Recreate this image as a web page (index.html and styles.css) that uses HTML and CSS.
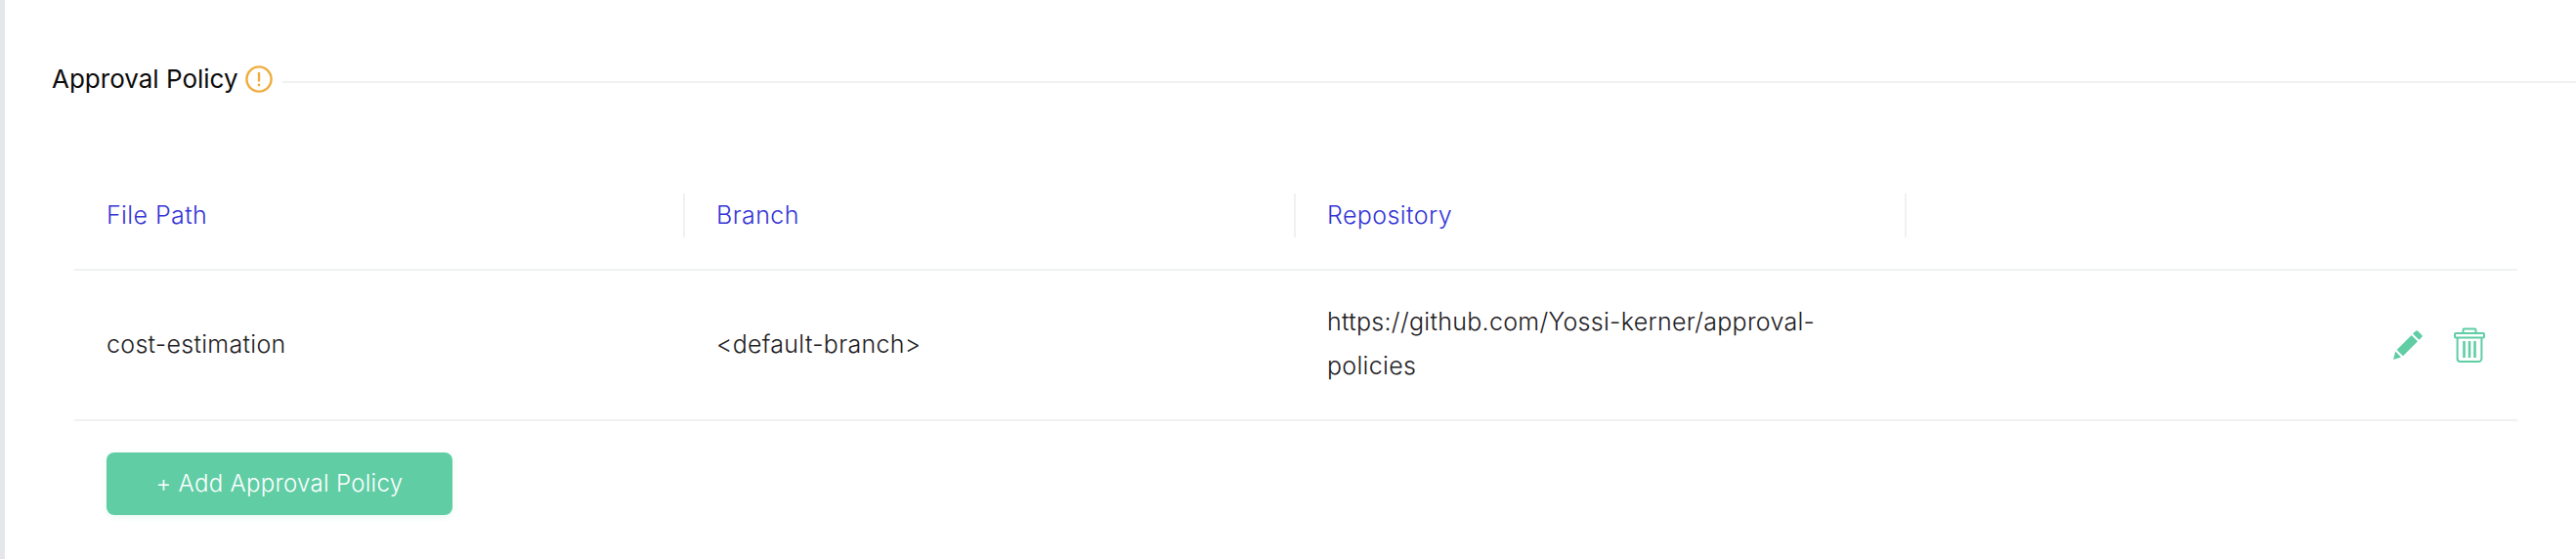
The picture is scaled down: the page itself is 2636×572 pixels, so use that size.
FILE: index.html
```html
<!DOCTYPE html>
<html lang="en">
<head>
<meta charset="utf-8">
<title>Approval Policy</title>
<link rel="stylesheet" href="styles.css">
</head>
<body>
<main class="page">
  <header class="section-head">
    <h2 class="section-title">Approval Policy</h2>
    <svg class="warn-icon" viewBox="0 0 28 28" aria-hidden="true">
      <circle cx="14" cy="14" r="12.6" fill="none" stroke="#f0ad3e" stroke-width="2.4"/>
      <path d="M14 7v9.5" fill="none" stroke="#f0ad3e" stroke-width="2.4"/>
      <path d="M14 18.6v2.6" fill="none" stroke="#f0ad3e" stroke-width="2.4"/>
    </svg>
    <span class="section-rule"></span>
  </header>
  <section class="policy-table">
    <div class="table-head">
      <div class="th">File Path</div>
      <div class="th">Branch</div>
      <div class="th">Repository</div>
      <div class="th th-last"></div>
    </div>
    <div class="table-row">
      <div class="td">cost-estimation</div>
      <div class="td">&lt;default-branch&gt;</div>
      <div class="td td-repo">https://github.com/Yossi-kerner/approval-policies</div>
      <div class="td td-actions">
        <svg class="icon-edit" viewBox="0 0 30 30" aria-hidden="true">
          <path fill="#60cda5" d="M22.6 1a2 2 0 0 1 2.8 0l3.6 3.4a2 2 0 0 1 0 2.8l-2.6 2.6-6.4-6.2z"/>
          <path fill="#60cda5" d="M18.6 5l6.4 6.2-15 15-6.4-6.2z"/>
          <path fill="#60cda5" d="M2.2 21.6l5.8 5.8-8 2.6z"/>
        </svg>
        <svg class="icon-trash" viewBox="0 0 32 36" aria-hidden="true">
          <g fill="none" stroke="#60cda5" stroke-width="2">
            <path d="M9.5 6V2.6a1 1 0 0 1 1-1h11a1 1 0 0 1 1 1V6"/>
            <rect x="1" y="6" width="30" height="4.4" rx="1"/>
            <path d="M3.6 10.4V32a3 3 0 0 0 3 3h18.8a3 3 0 0 0 3-3V10.4"/>
          </g>
          <g fill="#60cda5">
            <rect x="9.2" y="14" width="2.6" height="17"/>
            <rect x="14.7" y="14" width="2.6" height="17"/>
            <rect x="20.2" y="14" width="2.6" height="17"/>
          </g>
        </svg>
      </div>
    </div>
    <button class="add-btn" type="button">+ Add Approval Policy</button>
  </section>
</main>
</body>
</html>
```

FILE: styles.css
```css
* { box-sizing: border-box; }
html, body { margin: 0; height: 100%; background: #fff; }
body {
  font-family: "Inter", "Open Sans", "Liberation Sans", sans-serif;
  font-weight: 350;
  overflow: hidden;
}
.page {
  height: 572px;
  border-left: 5px solid #e4e6e9;
  padding: 63px 0 0 48px;
}
.section-head {
  display: flex;
  align-items: center;
  height: 36px;
}
.section-title {
  margin: 0;
  font-size: 26px;
  font-weight: 400;
  color: #0c0c0c;
  line-height: 36px;
}
.warn-icon {
  width: 28px;
  height: 28px;
  margin-left: 7px;
}
.section-rule {
  flex: 1;
  height: 2px;
  background: #f0f1f2;
  margin: 6px 0 0 10px;
}
.policy-table {
  margin: 0 60px 0 23px;
  padding-top: 99px;
}
.table-head, .table-row {
  display: grid;
  grid-template-columns: 625px 625px 625px 1fr;
  border-bottom: 2px solid #f0f1f2;
}
.table-head {
  height: 79px;
  padding-bottom: 30px;
}
.th {
  height: 45px;
  padding-left: 33px;
  font-size: 25px;
  letter-spacing: 0.4px;
  line-height: 45px;
  color: #3535d6;
  border-right: 2px solid #f0f1f2;
}
.th + .th { padding-left: 32px; }
.th-last { border-right: 0; }
.table-row {
  height: 154px;
  align-items: center;
}
.td {
  padding: 0 0 2px 33px;
  font-size: 25px;
  letter-spacing: 0.3px;
  line-height: 45px;
  color: #1e2024;
}
.td + .td { padding-left: 32px; }
.td-repo { padding-right: 90px; }
.td.td-actions {
  display: flex;
  justify-content: flex-end;
  align-items: center;
  gap: 32px;
  padding: 0 33px 0 0;
}
.icon-edit { width: 30px; height: 30px; }
.icon-trash { width: 32px; height: 36px; }
.add-btn {
  display: block;
  width: 354px;
  height: 64px;
  margin: 32px 0 0 33px;
  padding: 0 0 2px;
  border: 0;
  border-radius: 8px;
  background: #60cda5;
  box-shadow: 0 2px 6px rgba(96, 205, 165, 0.15);
  color: #fff;
  font: inherit;
  font-size: 24px;
  letter-spacing: 0.3px;
}
```
